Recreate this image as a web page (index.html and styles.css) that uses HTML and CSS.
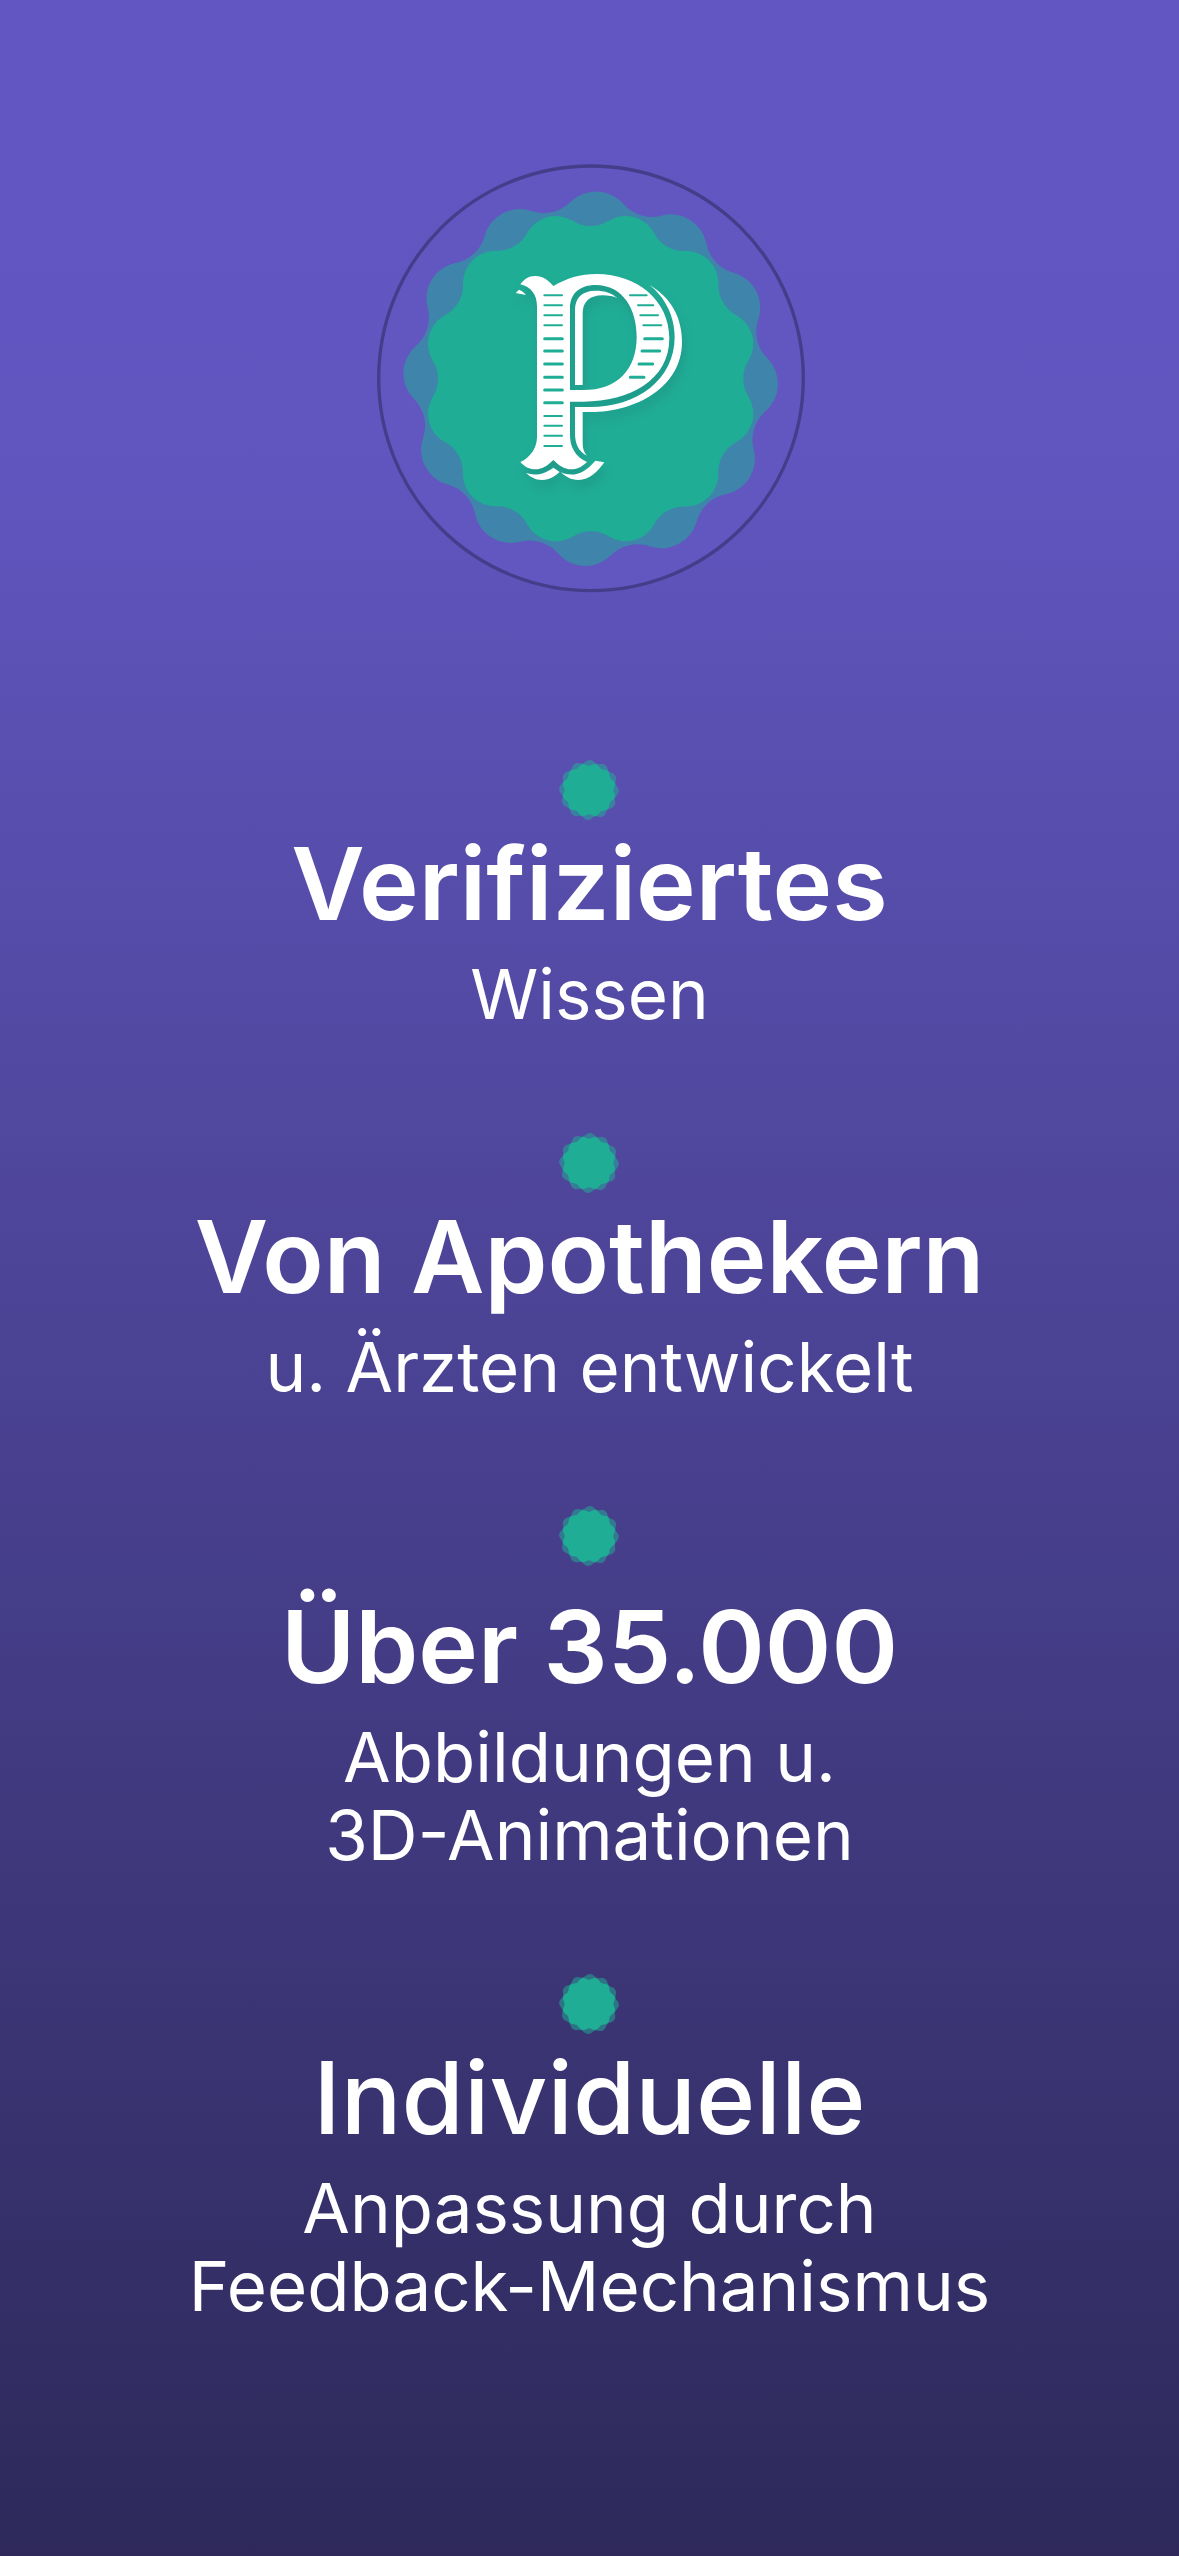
FILE: index.html
```html
<!DOCTYPE html>
<html lang="de">
<head>
  <meta charset="utf-8">
  <meta name="viewport" content="width=device-width, initial-scale=1">
  <title>Verifiziertes Wissen</title>
  <link rel="stylesheet" href="styles.css">
</head>
<body>
  <svg class="sprite" aria-hidden="true">
    <symbol id="seal" viewBox="-564 -564 1128 1128">
      <defs>
        <path id="scallop" d="M-71-471A97 97 0 0 1 71-471A101 101 0 0 0 174-443A97 97 0 0 1 297-373A101 101 0 0 0 373-297A97 97 0 0 1 443-174A101 101 0 0 0 471-71A97 97 0 0 1 471 71A101 101 0 0 0 443 174A97 97 0 0 1 373 297A101 101 0 0 0 297 373A97 97 0 0 1 174 443A101 101 0 0 0 71 471A97 97 0 0 1-71 471A101 101 0 0 0-174 443A97 97 0 0 1-297 373A101 101 0 0 0-373 297A97 97 0 0 1-443 174A101 101 0 0 0-471 71A97 97 0 0 1-471-71A101 101 0 0 0-443-174A97 97 0 0 1-373-297A101 101 0 0 0-297-373A97 97 0 0 1-174-443A101 101 0 0 0-71-471Z"/>
      </defs>
      <use href="#scallop" transform="rotate(2) scale(1.12)" fill="#20ad96" fill-opacity=".53"/>
      <use href="#scallop" transform="rotate(15)" fill="#20ad96"/>
    </symbol>
  </svg>

  <main class="page">
    <svg class="logo" viewBox="0 0 1380 1380" role="img" aria-label="Logo">
      <circle cx="693" cy="685" r="637" fill="#6256c1" stroke="#453d8a" stroke-width="10"/>
      <use href="#seal" x="128" y="122" width="1128" height="1128"/>
      <g class="logo-letter" fill="#fff">
        <path fill-rule="evenodd" d="M580 408C620 385 660 372 710 372C830 372 928 450 928 565C928 690 810 755 670 755H630V855C630 890 645 920 681 936C668 948 655 958 634 958C612 958 595 945 580 930C565 945 548 958 526 958C505 958 492 948 481 936C515 920 531 890 531 860V470C531 435 515 412 481 403C492 388 505 378 526 378C550 378 566 392 580 408ZM630 720H670C770 720 830 660 830 560C830 480 790 405 707 405C660 405 630 430 630 475Z"/>
        <path d="M645 705V480C645 445 665 422 707 422C735 422 757 430 773 445C760 438 745 436 728 436C690 436 668 455 668 490V705Z"/>
        <path d="M868 405C930 440 966 500 966 575C966 710 830 786 690 786H668V880C668 896 672 908 681 917C655 905 645 880 645 850V771H690C830 771 944 690 944 560C944 500 915 440 868 405Z"/>
        <path d="M498 969C525 978 550 974 580 953L599 966C585 978 570 990 546 990C525 990 510 980 498 969Z"/>
        <path d="M602 967C640 982 672 972 706 932L733 937C712 965 690 990 655 990C633 990 617 980 602 967Z"/>
        <path d="M467 429L477 419C486 422 493 428 498 435Z"/>
      </g>
      <g stroke="#20ad96" stroke-linecap="round">
        <path stroke-width="6" d="M553 436H606M553 466H606M553 496H606M553 526H606M553 798H606M553 827H606M553 857H606M553 888H606M810 436H860M834 466H880M841 496H894M850 526H904"/>
        <path stroke-width="9" d="M554 566H607M554 603H607M554 642H607M554 682H607M554 720H607M554 758H607M854 566H907M846 603H899M837 642H878M811 682H852"/>
      </g>
    </svg>

    <ul class="features">
      <li class="feature">
        <svg class="feature-seal" aria-hidden="true"><use href="#seal"/></svg>
        <h2 class="feature-title">Verifiziertes</h2>
        <p class="feature-text">Wissen</p>
      </li>
      <li class="feature">
        <svg class="feature-seal" aria-hidden="true"><use href="#seal"/></svg>
        <h2 class="feature-title">Von Apothekern</h2>
        <p class="feature-text">u. Ärzten entwickelt</p>
      </li>
      <li class="feature">
        <svg class="feature-seal" aria-hidden="true"><use href="#seal"/></svg>
        <h2 class="feature-title feature-title-accented">Über 35.000</h2>
        <p class="feature-text">Abbildungen u.<br>3D-Animationen</p>
      </li>
      <li class="feature">
        <svg class="feature-seal" aria-hidden="true"><use href="#seal"/></svg>
        <h2 class="feature-title feature-title-medium">Individuelle</h2>
        <p class="feature-text">Anpassung durch<br>Feedback-Mechanismus</p>
      </li>
    </ul>
  </main>
</body>
</html>
```

FILE: styles.css
```css
* {
  box-sizing: border-box;
}

body {
  margin: 0;
  min-height: 100vh;
  color: #fff;
  font-family: Inter, "Liberation Sans", sans-serif;
  background: linear-gradient(#6257c2 0%, #6156c0 17%, #2e295a 100%);
}

.sprite {
  position: absolute;
  width: 0;
  height: 0;
}

.page {
  display: flex;
  flex-direction: column;
  align-items: center;
  padding: 150px 24px;
}

.logo {
  width: 460px;
  height: 460px;
}

.logo-letter {
  filter: drop-shadow(6px 22px 14px rgba(20, 80, 90, .2));
}

.features {
  display: flex;
  flex-direction: column;
  gap: 100px;
  margin: 150px 0 0;
  padding: 0;
  list-style: none;
}

.feature {
  display: flex;
  flex-direction: column;
  align-items: center;
  text-align: center;
}

.feature-seal {
  width: 60px;
  height: 60px;
}

.feature-title {
  margin: 3px 0 0;
  font-size: 101px;
  font-weight: 600;
  line-height: 120px;
}

.feature-title-accented {
  margin-top: 20px;
}

.feature-title-medium {
  font-weight: 500;
}

.feature-text {
  margin: 12px 0 0;
  font-size: 69px;
  line-height: 78px;
}
```
